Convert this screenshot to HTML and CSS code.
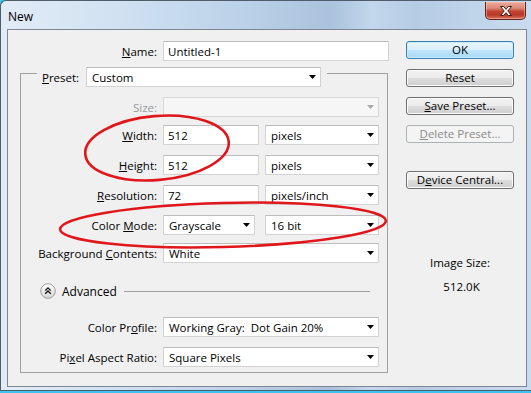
FILE: index.html
```html
<!DOCTYPE html>
<html>
<head>
<meta charset="utf-8">
<title>New</title>
<link rel="stylesheet" href="styles.css">
</head>
<body>
<div class="window">
  <div class="titlebar">
    <span class="title">New</span>
    <div class="close">
      <svg width="16" height="12" viewBox="0 0 16 12"><path d="M2.5 1.5h3.2L8 4.3l2.3-2.8h3.2L9.8 6l3.7 4.5h-3.2L8 7.7l-2.3 2.8H2.5L6.2 6z" fill="#fff" stroke="#4a1c16" stroke-width="1" stroke-linejoin="round"/></svg>
    </div>
  </div>
  <div class="client">
    <div class="main">
      <div class="name-row">
        <span class="lbl"><u>N</u>ame:</span>
        <div class="fld">Untitled-1</div>
      </div>
      <div class="group">
        <div class="preset-row">
          <span class="preset-lbl"><u>P</u>reset:</span>
          <div class="fld sel w-preset"><span>Custom</span><i class="arrow"></i></div>
        </div>
        <div class="frow">
          <span class="lbl dis">Size:</span>
          <div class="fld sel disabled"><span></span><i class="arrow"></i></div>
        </div>
        <div class="frow tight">
          <span class="lbl"><u>W</u>idth:</span>
          <div class="pair">
            <div class="fld w96">512</div>
            <div class="fld sel w114"><span>pixels</span><i class="arrow"></i></div>
          </div>
        </div>
        <div class="frow">
          <span class="lbl"><u>H</u>eight:</span>
          <div class="pair">
            <div class="fld w96">512</div>
            <div class="fld sel w114"><span>pixels</span><i class="arrow"></i></div>
          </div>
        </div>
        <div class="frow">
          <span class="lbl"><u>R</u>esolution:</span>
          <div class="pair">
            <div class="fld w96">72</div>
            <div class="fld sel w114"><span>pixels/inch</span><i class="arrow"></i></div>
          </div>
        </div>
        <div class="frow">
          <span class="lbl">Color <u>M</u>ode:</span>
          <div class="pair">
            <div class="fld sel w92"><span>Grayscale</span><i class="arrow"></i></div>
            <div class="fld sel w114"><span>16 bit</span><i class="arrow"></i></div>
          </div>
        </div>
        <div class="frow tight">
          <span class="lbl">Background <u>C</u>ontents:</span>
          <div class="fld sel"><span>White</span><i class="arrow"></i></div>
        </div>
        <div class="adv">
          <svg class="adv-btn" width="16" height="16" viewBox="0 0 16 16">
            <defs><linearGradient id="g" x1="0" y1="0" x2="0" y2="1"><stop offset="0" stop-color="#ffffff"/><stop offset="1" stop-color="#d6d6d6"/></linearGradient></defs>
            <circle cx="8" cy="8" r="7.3" fill="url(#g)" stroke="#9c9c9c" stroke-width="1"/>
            <path d="M5.2 7.6L8 4.8l2.8 2.8M5.2 10.8L8 8l2.8 2.8" fill="none" stroke="#111" stroke-width="1.3"/>
          </svg>
          <span class="adv-text">Advanced</span>
          <span class="adv-line"></span>
        </div>
        <div class="frow cp">
          <span class="lbl">Color Pr<u>o</u>file:</span>
          <div class="fld sel"><span>Working Gray:&nbsp; Dot Gain 20%</span><i class="arrow"></i></div>
        </div>
        <div class="frow">
          <span class="lbl">Pi<u>x</u>el Aspect Ratio:</span>
          <div class="fld sel"><span>Square Pixels</span><i class="arrow"></i></div>
        </div>
      </div>
    </div>
    <div class="side">
      <div class="btn default">OK</div>
      <div class="btn">Reset</div>
      <div class="btn"><span><u>S</u>ave Preset...</span></div>
      <div class="btn disabled"><span><u>D</u>elete Preset...</span></div>
      <div class="btn device"><span>D<u>e</u>vice Central...</span></div>
      <div class="imgsize">
        <div class="is-label">Image Size:</div>
        <div class="is-value">512.0K</div>
      </div>
    </div>
  </div>
</div>
<svg class="marks" width="531" height="393" viewBox="0 0 531 393">
  <ellipse cx="157" cy="148" rx="72" ry="32" transform="rotate(-5 157 148)"/>
  <ellipse cx="223" cy="225" rx="163" ry="22" transform="rotate(-1.5 223 225)"/>
</svg>
</body>
</html>
```

FILE: styles.css
```css
* { box-sizing: border-box; }
html, body { margin: 0; padding: 0; }
body {
  width: 531px;
  height: 393px;
  position: relative;
  overflow: hidden;
  background: #3cc3ef;
  font-family: "Open Sans", "Noto Sans", sans-serif;
  font-size: 11.5px;
  color: #000;
}
u { text-decoration: underline; text-underline-offset: 1px; }

.window {
  width: 531px;
  height: 391px;
  border: 1px solid #4f5d6b;
  border-right: none;
  border-radius: 6px 0 0 0;
  background: linear-gradient(90deg, #e2ecf7 0%, #d2e2f2 20%, #bcd2e9 45%, #aac2dd 62%, #c3d7ec 70%, #b6cce5 78%, #c9dbee 100%);
  display: flex;
  flex-direction: column;
}

.titlebar {
  height: 28px;
  display: flex;
  justify-content: space-between;
  align-items: flex-start;
  padding-left: 7px;
}
.title {
  font-size: 12px;
  line-height: 16px;
  margin-top: 8px;
  color: #000;
}
.close {
  width: 41px;
  height: 18px;
  margin-top: 1px;
  margin-right: 5px;
  border: 1px solid #5b2620;
  border-top: none;
  border-radius: 0 0 5px 5px;
  background: linear-gradient(#eaa999 0%, #dd8b79 35%, #c2412f 55%, #b9382a 75%, #d8705a 100%);
  box-shadow: inset 0 0 0 1px rgba(255, 200, 190, 0.5);
  display: flex;
  align-items: center;
  justify-content: center;
}

.client {
  margin-left: 6px;
  width: 520px;
  height: 358px;
  border: 1px solid #7b8894;
  background: #f0f0f0;
  display: flex;
  column-gap: 17px;
  padding: 11px 0 0 12px;
}

.main { width: 369px; }

.name-row {
  display: grid;
  grid-template-columns: 137px 226px;
  column-gap: 6px;
  align-items: center;
  height: 20px;
}

.lbl { text-align: right; white-space: nowrap; }
.lbl.dis { color: #9a9a9a; }

.fld {
  height: 20px;
  border: 1px solid #d3d3d3;
  border-top-color: #bdbdbd;
  background: #fff;
  display: flex;
  align-items: center;
  justify-content: space-between;
  padding: 0 4px;
  white-space: nowrap;
}
.fld.sel { padding: 0 4px 0 5px; }
.fld.disabled { background: #f6f6f6; border-color: #d8d8d8; }
.arrow {
  display: block;
  width: 7px;
  height: 4px;
  background: #000;
  clip-path: polygon(0 0, 100% 0, 50% 100%);
}
.disabled .arrow { background: #a9a9a9; }

.group {
  margin-top: 12px;
  width: 368px;
  border: 1px solid #a0a0a0;
  padding-bottom: 5px;
  display: flex;
  flex-direction: column;
  row-gap: 10px;
}

.preset-row {
  margin-top: -7px;
  margin-left: 16px;
  align-self: flex-start;
  display: flex;
  align-items: center;
  padding: 0 6px 0 5px;
  background: #f0f0f0;
}
.preset-lbl { width: 44px; white-space: nowrap; }
.w-preset { width: 235px; }

.frow {
  display: grid;
  grid-template-columns: 136px 216px;
  column-gap: 6px;
  align-items: center;
  height: 20px;
}
.frow.tight { margin-top: -2px; }
.frow.cp { margin-top: 8px; }

.pair { display: flex; justify-content: space-between; }
.w96 { width: 96px; }
.w92 { width: 92px; }
.w114 { width: 114px; }

.adv {
  display: flex;
  align-items: center;
  height: 16px;
  margin: 10px 17px 0 19px;
}
.adv-btn { flex: none; }
.adv-text { margin-left: 6px; font-size: 12px; }
.adv-line { flex: 1; height: 1px; background: #a0a0a0; margin-left: 7px; }

.side {
  width: 108px;
  display: flex;
  flex-direction: column;
  row-gap: 10px;
}
.btn {
  height: 18px;
  border: 1px solid #707070;
  border-radius: 3px;
  background: linear-gradient(#f3f3f3 0%, #ebebeb 48%, #dddddd 52%, #cfcfcf 100%);
  box-shadow: inset 0 0 0 1px #fbfbfb;
  display: flex;
  align-items: center;
  justify-content: center;
  white-space: nowrap;
  line-height: 14px;
}
.btn.default {
  border-color: #3c7fb1;
  background: linear-gradient(#eaf6fd 0%, #d9f0fc 48%, #bee6fd 52%, #a7d9f5 100%);
  box-shadow: inset 0 0 0 1px #c9ecfd;
}
.btn.disabled {
  border-color: #adb2b5;
  background: #f4f4f4;
  box-shadow: none;
  color: #8b8b8b;
}
.btn.device { margin-top: 18px; }

.imgsize {
  margin-top: 57px;
  text-align: center;
  line-height: 14px;
}
.is-value { margin-top: 10px; padding-left: 3px; }

.marks {
  position: absolute;
  left: 0;
  top: 0;
  pointer-events: none;
}
.marks ellipse {
  fill: none;
  stroke: #e0161b;
  stroke-width: 2.6;
}
```
